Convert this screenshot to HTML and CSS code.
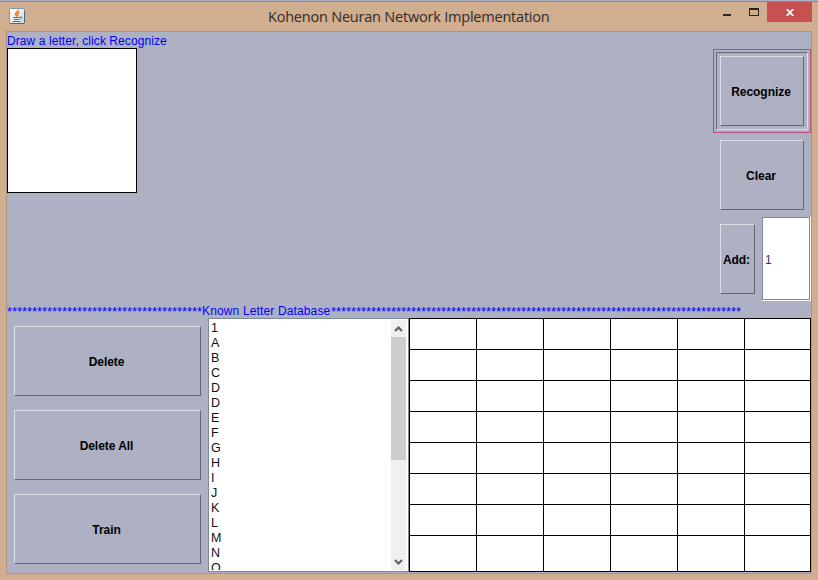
FILE: index.html
```html
<!DOCTYPE html>
<html lang="en">
<head>
<meta charset="utf-8">
<title>Kohenon Neuran Network Implementation</title>
<link rel="stylesheet" href="styles.css">
</head>
<body>
<div class="window">
  <header class="titlebar">
    <svg class="app-icon" width="16" height="16" viewBox="0 0 16 16">
      <defs><linearGradient id="tile" x1="0" y1="0" x2="1" y2="1"><stop offset="0" stop-color="#fff"/><stop offset="1" stop-color="#cbd8df"/></linearGradient></defs>
      <rect x=".5" y=".5" width="15" height="15" rx="1" fill="url(#tile)" stroke="#8097a5"/>
      <path d="M1 15.5h14M15.500 3v12" stroke="#45687d"/>
      <path d="M9.500 2C9.500 4 6 4.500 6.500 6.500L8 8.500M10.500 4.500C8 5.500 8 6.500 9 8" fill="none" stroke="#e77b22" stroke-width="1.500"/>
      <path d="M4 9.500h7M5 11.500h5M3.500 13.500h8M11 9c3-1 2 2 0 2" fill="none" stroke="#52768f"/>
    </svg>
    <h1 class="title">Kohenon Neuran Network Implementation</h1>
    <div class="controls">
      <svg class="minmax" width="50" height="20" viewBox="0 0 50 20" shape-rendering="crispEdges">
        <path d="M6 12h8v2H6z" fill="#272422"/>
        <path d="M32 6h10v8H32zM33 8v5h8V8z" fill="#272422" fill-rule="evenodd"/>
      </svg>
      <div class="close"><svg width="8" height="7" viewBox="0 0 8 7"><path d="M.7 0l6.600 7M7.300 0L.7 7" stroke="#fff" stroke-width="1.800"/></svg></div>
    </div>
  </header>
  <main class="content">
    <p class="caption">Draw a letter, click Recognize</p>
    <section class="top">
      <div class="canvas"></div>
      <div class="actions">
        <div class="slot focus"><div class="ring"><button class="btn">Recognize</button></div></div>
        <div class="slot"><button class="btn">Clear</button></div>
        <div class="add-row">
          <div class="slot"><button class="btn">Add:</button></div>
          <div class="field"><div class="field-in">1</div></div>
        </div>
      </div>
    </section>
    <p class="divider"><span class="stars">***************************************</span><span class="known">Known Letter Database</span><span class="stars">**********************************************************************************</span></p>
    <section class="bottom">
      <div class="side">
        <div class="slot"><button class="btn">Delete</button></div>
        <div class="slot"><button class="btn">Delete All</button></div>
        <div class="slot"><button class="btn">Train</button></div>
      </div>
      <div class="list">
        <ul class="items"><li>1</li><li>A</li><li>B</li><li>C</li><li>D</li><li>D</li><li>E</li><li>F</li><li>G</li><li>H</li><li>I</li><li>J</li><li>K</li><li>L</li><li>M</li><li>N</li><li>O</li></ul>
        <div class="scroll">
          <svg class="arrow" width="15" height="17" viewBox="0 0 15 17"><path d="M4 11L7.500 7.500 11 11" fill="none" stroke="#606060" stroke-width="2.200"/></svg>
          <div class="thumb"></div>
          <svg class="arrow" width="15" height="17" viewBox="0 0 15 17"><path d="M4 7L7.500 10.500 11 7" fill="none" stroke="#606060" stroke-width="2.200"/></svg>
        </div>
      </div>
      <div class="grid">
        <i></i><i></i><i></i><i></i><i></i><i></i><i></i><i></i><i></i><i></i><i></i><i></i>
        <i></i><i></i><i></i><i></i><i></i><i></i><i></i><i></i><i></i><i></i><i></i><i></i>
        <i></i><i></i><i></i><i></i><i></i><i></i><i></i><i></i><i></i><i></i><i></i><i></i>
        <i></i><i></i><i></i><i></i><i></i><i></i><i></i><i></i><i></i><i></i><i></i><i></i>
      </div>
    </section>
  </main>
</div>
</body>
</html>
```
FILE: styles.css
```css
* { box-sizing: border-box; margin: 0; padding: 0; }
body { width: 818px; height: 580px; overflow: hidden; background: #aeb1c3; font-family: "Liberation Sans", Arial, sans-serif; font-size: 12px; }
.window { margin-top: 1px; height: 579px; border-top: 1px solid #9a8170; background: #d0ae8f; padding: 0 6px; }
.titlebar { height: 29px; display: flex; align-items: flex-start; margin-right: -6px; }
.app-icon { margin: 6px 0 0 3px; flex: none; }
.title { flex: 1; margin-left: 243px; padding-top: 4px; font: 400 14.5px/21px "Open Sans", "Noto Sans", sans-serif; letter-spacing: -.21px; color: #302b29; white-space: nowrap; }
.controls { display: flex; margin-right: 6px; }
.close { width: 45px; height: 20px; background: #c75050; display: flex; align-items: center; justify-content: center; }
.content { width: 806px; height: 543px; border: 1px solid #b0937d; background: #aeb1c3; }
.caption { height: 17px; line-height: 19px; font-size: 12px; color: #00f; white-space: nowrap; letter-spacing: .08px; }
.top { height: 252px; display: flex; justify-content: space-between; }
.canvas { width: 130px; height: 145px; margin-top: -1px; border: 1px solid #000; background: #fff; }
.actions { width: 98px; }
.slot { height: 84px; padding: 7px; }
.btn { display: block; width: 100%; height: 70px; padding: 2px 2px 0 0; border: 1px solid; border-color: #dcdde6 #666775 #666775 #dcdde6; background: #aeb1c3; font: 700 12px "Liberation Sans", Arial, sans-serif; letter-spacing: -.05px; color: #000; white-space: nowrap; }
.focus { border: 1px solid #b94c79; padding: 2px; }
.ring { height: 78px; border: 1px solid; border-color: #666775 #dcdde6 #dcdde6 #666775; padding: 3px; }
.add-row { display: flex; }
.add-row .slot { width: 49px; }
.field { width: 49px; height: 84px; border: solid #fff; border-width: 0 1px 1px 0; }
.field-in { height: 83px; border: 1px solid #7a8a99; background: #fff; color: #333366; padding-left: 2px; line-height: 85px; }
.divider { height: 17px; line-height: 21px; display: flex; color: #00f; white-space: nowrap; }
.stars { font-size: 13px; letter-spacing: -.059px; }
.known { width: 129px; letter-spacing: .14px; }
.bottom { height: 254px; display: flex; }
.side { width: 201px; padding-top: 1px; }
.list { width: 201px; border: 1px solid #7a8a99; background: #fff; display: flex; padding: 1px 2px 1px 1px; }
.items { flex: 1; list-style: none; overflow: hidden; height: 250px; padding-left: 1px; }
.items li { height: 15px; line-height: 17px; font-size: 12.5px; color: #111; }
.scroll { width: 15px; background: #f0f0f0; display: flex; flex-direction: column; }
.arrow { flex: none; }
.thumb { height: 123px; margin-bottom: auto; background: #cdcdcd; }
.grid { width: 402px; border: 1px solid #000; background: #000; display: grid; grid-template-columns: repeat(5, 66px) 65px; grid-template-rows: repeat(7, 30px) 35px; gap: 1px; }
.grid i { background: #fff; }
```
